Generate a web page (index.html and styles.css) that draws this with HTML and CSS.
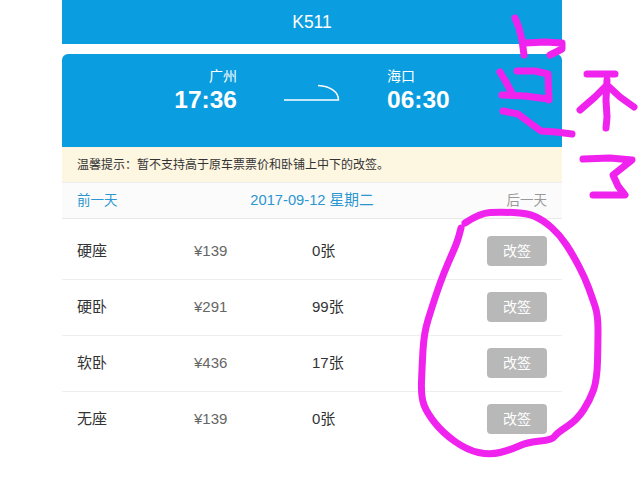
FILE: index.html
```html
<!DOCTYPE html>
<html lang="en">
<head>
  <meta charset="UTF-8">
  <meta name="viewport" content="width=device-width, initial-scale=1.0">
  <title>K511</title>
  <link rel="stylesheet" href="styles.css">
</head>
<body>
  <div class="panel">
    <div class="train-title">K511</div>

    <!-- Route card -->
    <div class="route">
      <div class="stop stop-from">
        <div class="city">广州</div>
        <div class="time">17:36</div>
      </div>
      <svg class="route-arrow" width="56" height="20" viewBox="0 0 56 20">
        <path d="M0 16H54.5C54.5 8 46 2 34 1.5" fill="none" stroke="#fff" stroke-width="1.5"/>
      </svg>
      <div class="stop">
        <div class="city">海口</div>
        <div class="time">06:30</div>
      </div>
    </div>

    <div class="tip">温馨提示：暂不支持高于原车票票价和卧铺上中下的改签。</div>

    <div class="day-nav">
      <span class="day-link">前一天</span>
      <span class="day-date">2017-09-12 星期二</span>
      <span class="day-next">后一天</span>
    </div>

    <!-- Seat list -->
    <div class="seats">
      <div class="seat">
        <span class="seat-name">硬座</span>
        <span class="seat-price">¥139</span>
        <span class="seat-count">0张</span>
        <span class="btn">改签</span>
      </div>
      <div class="seat">
        <span class="seat-name">硬卧</span>
        <span class="seat-price">¥291</span>
        <span class="seat-count">99张</span>
        <span class="btn">改签</span>
      </div>
      <div class="seat">
        <span class="seat-name">软卧</span>
        <span class="seat-price">¥436</span>
        <span class="seat-count">17张</span>
        <span class="btn">改签</span>
      </div>
      <div class="seat">
        <span class="seat-name">无座</span>
        <span class="seat-price">¥139</span>
        <span class="seat-count">0张</span>
        <span class="btn">改签</span>
      </div>
    </div>
  </div>

  <!-- Hand drawn marks on top of the screenshot -->
  <svg class="scribble" width="644" height="495" viewBox="0 0 644 495">
    <path d="M515 18L519 28L522 40L524 55M525 43L545 42L562 43L562 49L550 55"/>
    <path d="M500 72L506 82L513 95M517 71L535 71L548 74L549 100M502 95L525 96L548 99"/>
    <path d="M503 111L518 114L530 123L541 131L556 132L572 134"/>
    <path d="M587 74L615 74M607 80L606 100L607 117L606 128M580 110L595 97L607 85L620 97L634 107"/>
    <path d="M583 159L610 158L632 160L613 175L618 186L625 195L608 195L593 195"/>
    <path d="M465 223Q480 213 490 212.5Q500 212 513.5 212.5Q527 213 535 216.5Q543 220 551.5 227.5Q560 235 566.5 245Q573 255 579 266.5Q585 278 588.5 287.5Q592 297 595 306Q598 315 598 329Q598 343 597.5 361.5Q597 380 593.5 390Q590 400 583.5 410Q577 420 567 426.5Q557 433 554.5 436.5Q552 440 540 441Q528 442 519 446Q510 450 500 452.5Q490 455 478.5 452.5Q467 450 455 441.5Q443 433 435 423Q427 413 424 405Q421 397 421.5 382Q422 367 423 350Q424 333 428 320Q432 307 436 295Q440 283 444 273Q448 263 452.5 253Q457 243 459 235.5L461 228"/>
  </svg>
</body>
</html>
```

FILE: styles.css
```css
/* Basic Page Styling */
html, body {
  margin: 0;
  padding: 0;
  background-color: #fff;
  color: #333;
  font-family: "Liberation Sans", "Noto Sans CJK SC", sans-serif;
}
.panel {
  width: 500px;
  margin-left: 62px;
}
.train-title {
  height: 44px;
  line-height: 44px;
  margin-bottom: 10px;
  text-align: center;
  font-size: 17.5px;
  color: #fff;
  background: #0a9de0;
}

/* Route card */
.route {
  display: grid;
  grid-template-columns: 1fr 150px 1fr;
  height: 93px;
  box-sizing: border-box;
  padding-top: 13px;
  background: #0a9de0;
  border-radius: 6px 6px 0 0;
  color: #fff;
}
.stop-from {
  text-align: right;
}
.city {
  font-size: 14px;
  line-height: 18px;
}
.time {
  font-size: 24.5px;
  font-weight: bold;
  line-height: 30px;
}
.route-arrow {
  justify-self: center;
  margin-top: 17px;
}

.tip {
  height: 35px;
  line-height: 35px;
  padding-left: 15px;
  font-size: 12px;
  background: #fdf6e1;
  border-top: 1px solid #f8f3e4;
  box-sizing: border-box;
}

.day-nav {
  display: flex;
  justify-content: space-between;
  height: 37px;
  line-height: 35px;
  padding: 0 15px;
  font-size: 13.5px;
  background: #fbfbfb;
  border-top: 1px solid #eee;
  border-bottom: 1px solid #e8e8e8;
  box-sizing: border-box;
}
.day-link {
  color: #2b96cf;
}
.day-date {
  font-size: 14.7px;
  color: #2b96cf;
}
.day-next {
  color: #999;
}

/* Seat list */
.seat {
  display: grid;
  grid-template-columns: 117px 118px 1fr 60px;
  align-items: center;
  height: 56px;
  padding: 0 15px 1px;
  font-size: 15px;
  border-bottom: 1px solid #eee;
  box-sizing: border-box;
}
.seat:first-child {
  height: 61px;
  padding-top: 5px;
}
.seat:last-child {
  border-bottom-color: transparent;
}
.seat-name, .seat-count {
  margin-bottom: 3px;
}
.seat-price {
  margin-bottom: 1px;
  color: #666;
}
.btn {
  height: 30px;
  line-height: 30px;
  text-align: center;
  font-size: 14px;
  color: #fff;
  background: #b8b8b8;
  border-radius: 4px;
}

.scribble {
  position: absolute;
  top: 0;
  left: 0;
}
.scribble path {
  fill: none;
  stroke: #f022ee;
  stroke-width: 7;
  stroke-linecap: round;
  stroke-linejoin: round;
}
```
